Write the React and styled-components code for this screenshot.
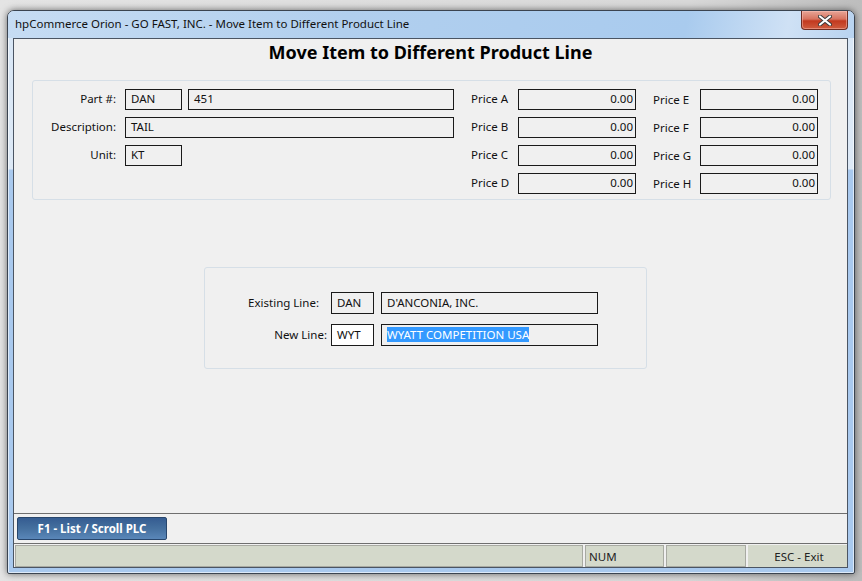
import styled, { createGlobalStyle } from 'styled-components';

const GlobalStyle = createGlobalStyle`
  html, body {
    margin: 0;
    padding: 0;
    background: #d9d9d9;
  }
  body {
    font-family: "Noto Sans", "Open Sans", "DejaVu Sans", sans-serif;
    font-size: 11.5px;
    color: #000;
  }
`;

const Desktop = styled.div`
  width: 862px;
  height: 581px;
  padding: 10px 7px 7px 7px;
  box-sizing: border-box;
  background: linear-gradient(to right, #e4e4e4, #d8d8d8 80%, #bdbdbd);
`;

const Window = styled.div`
  width: 848px;
  height: 564px;
  box-sizing: border-box;
  display: flex;
  flex-direction: column;
  border: 1px solid #3b4450;
  border-radius: 7px 7px 2px 2px;
  background: linear-gradient(to bottom, #bcd5f1 0, #d9e7f6 30px, #dde9f6 158px, #a9c9ee 159px, #a9c9ee 100%);
  box-shadow: 0 0 7px rgba(0, 0, 0, 0.55), inset 0 0 0 1px rgba(255, 255, 255, 0.6);
`;

const TitleBar = styled.div`
  height: 27px;
  display: flex;
  align-items: flex-start;
  justify-content: space-between;
  padding-left: 7px;
  background: linear-gradient(100deg, #c6dcf3 0, #b1cfee 40%, #a9cbee 80%, #cfe1f5 92%, #b8d3f0 100%);
  border-radius: 6px 6px 0 0;
`;

const Title = styled.div`
  font-size: 11.5px;
  line-height: 12px;
  margin-top: 7px;
  color: #111;
`;

const CloseButton = styled.div`
  width: 45px;
  height: 18px;
  margin-right: 6px;
  border: 1px solid #6e2c22;
  border-top: none;
  border-radius: 0 0 4px 4px;
  background: linear-gradient(to bottom, #e7a597 0, #d7735f 45%, #c2391f 55%, #cf5c3f 100%);
  display: flex;
  align-items: center;
  justify-content: center;
  box-shadow: inset 0 0 0 1px rgba(255, 200, 190, 0.45);
`;

const Client = styled.div`
  flex: 1;
  margin: 0 6px 5px 5px;
  border: 1px solid #4b5563;
  background: #f0f0f0;
  display: flex;
  flex-direction: column;
`;

const Content = styled.div`
  flex: 1;
  display: flex;
  flex-direction: column;
`;

const Heading = styled.h1`
  margin: 0;
  height: 27px;
  font-size: 18px;
  font-weight: 700;
  text-align: center;
  line-height: 27px;
`;

const Group = styled.div`
  box-sizing: border-box;
  width: ${({ $w }) => $w}px;
  height: ${({ $h }) => $h}px;
  margin-left: ${({ $left }) => $left}px;
  margin-top: ${({ $top }) => $top}px;
  border: 1px solid #d6dfe7;
  border-radius: 3px;
  padding-top: ${({ $pt }) => $pt}px;
  display: flex;
`;

const Fields = styled.div`
  display: flex;
  flex-direction: column;
  gap: ${({ $gap }) => $gap || 7}px;
`;

const Row = styled.div`
  display: flex;
  align-items: center;
  height: ${({ $h }) => $h || 21}px;
`;

const Label = styled.div`
  box-sizing: border-box;
  width: ${({ $w }) => $w}px;
  padding-right: ${({ $pr }) => $pr}px;
  padding-bottom: 2px;
  text-align: right;
  white-space: nowrap;
  color: #111;
`;

const Box = styled.div`
  box-sizing: border-box;
  width: ${({ $w }) => $w}px;
  height: ${({ $h }) => $h || 21}px;
  margin-left: ${({ $ml }) => $ml || 0}px;
  border: 1px solid #1a1a1a;
  background: ${({ $white }) => ($white ? '#fff' : 'transparent')};
  padding: 0 ${({ $num }) => ($num ? 2 : 4)}px 2px ${({ $num }) => ($num ? 2 : 5)}px;
  display: flex;
  align-items: center;
  justify-content: ${({ $num }) => ($num ? 'flex-end' : 'flex-start')};
  white-space: nowrap;
  overflow: hidden;
  color: #111;
`;

const Selected = styled.span`
  background: #3399ff;
  color: #fff;
  line-height: 15px;
`;

const Prices = styled.div`
  display: grid;
  grid-template-columns: 47px 118px 64px 118px;
  grid-auto-rows: 21px;
  row-gap: 7px;
  margin-left: 17px;
  align-items: center;
`;

const PriceLabel = styled.div`
  white-space: nowrap;
  color: #111;
  padding-left: ${({ $right }) => ($right ? 17 : 0)}px;
  margin-bottom: ${({ $right }) => ($right ? 0 : 2)}px;
`;

const ButtonBar = styled.div`
  height: 29px;
  border-top: 1px solid #6f6f6f;
  border-bottom: 1px solid #6f6f6f;
  display: flex;
  align-items: flex-start;
  padding-left: 3px;
`;

const FnButton = styled.div`
  box-sizing: border-box;
  width: 150px;
  height: 23px;
  margin-top: 3px;
  padding-bottom: 1px;
  border: 1px solid #28466c;
  border-radius: 2px;
  background: linear-gradient(to bottom, #355c91 0, #45709f 50%, #5a87b9 100%);
  color: #fff;
  font-weight: 700;
  font-size: 11.5px;
  display: flex;
  align-items: center;
  justify-content: center;
`;

const StatusBar = styled.div`
  height: 23px;
  display: flex;
  gap: 2px;
  padding: 1px 0 0 1px;
  box-sizing: border-box;
  background: #f0f0f0;
`;

const Panel = styled.div`
  box-sizing: border-box;
  width: ${({ $w }) => $w}px;
  flex: ${({ $grow }) => ($grow ? 1 : 'none')};
  height: 22px;
  background: #d4d9cb;
  border: 1px solid ${({ $flat }) => ($flat ? '#d4d9cb' : '#a8aaa2')};
  display: flex;
  align-items: center;
  justify-content: ${({ $center }) => ($center ? 'center' : 'flex-start')};
  padding-left: ${({ $center }) => ($center ? 3 : 3)}px;
  padding-top: 1px;
  color: #222;
`;

const prices = [
  ['Price A', 'Price E'],
  ['Price B', 'Price F'],
  ['Price C', 'Price G'],
  ['Price D', 'Price H'],
];

export default function App() {
  return (
    <>
      <GlobalStyle />
      <Desktop>
        <Window>
          <TitleBar>
            <Title>hpCommerce Orion - GO FAST, INC. - Move Item to Different Product Line</Title>
            <CloseButton>
              <svg width="14" height="11" viewBox="0 0 14 11">
                <path
                  d="M2 1.5 L12 9.5 M12 1.5 L2 9.5"
                  stroke="#3b3b3b"
                  strokeWidth="4"
                  strokeLinecap="round"
                />
                <path
                  d="M2 1.5 L12 9.5 M12 1.5 L2 9.5"
                  stroke="#fff"
                  strokeWidth="2.2"
                  strokeLinecap="round"
                />
              </svg>
            </CloseButton>
          </TitleBar>
          <Client>
            <Content>
              <Heading>Move Item to Different Product Line</Heading>
              <Group $w={799} $h={120} $left={18} $top={14} $pt={8}>
                <Fields>
                  <Row>
                    <Label $w={92} $pr={9}>Part #:</Label>
                    <Box $w={57}>DAN</Box>
                    <Box $w={266} $ml={6}>451</Box>
                  </Row>
                  <Row>
                    <Label $w={92} $pr={9}>Description:</Label>
                    <Box $w={329}>TAIL</Box>
                  </Row>
                  <Row>
                    <Label $w={92} $pr={9}>Unit:</Label>
                    <Box $w={57}>KT</Box>
                  </Row>
                </Fields>
                <Prices>
                  {prices.map(([a, b]) => [
                    <PriceLabel key={a}>{a}</PriceLabel>,
                    <Box key={a + 'v'} $w={118} $num>0.00</Box>,
                    <PriceLabel key={b} $right>{b}</PriceLabel>,
                    <Box key={b + 'v'} $w={118} $num>0.00</Box>,
                  ])}
                </Prices>
              </Group>
              <Group $w={443} $h={102} $left={190} $top={67} $pt={24}>
                <Fields $gap={10}>
                  <Row $h={22}>
                    <Label $w={126} $pr={12}>Existing Line:</Label>
                    <Box $w={43} $h={22}>DAN</Box>
                    <Box $w={217} $h={22} $ml={7}>D'ANCONIA, INC.</Box>
                  </Row>
                  <Row $h={22}>
                    <Label $w={126} $pr={4}>New Line:</Label>
                    <Box $w={43} $h={22} $white>WYT</Box>
                    <Box $w={217} $h={22} $ml={7}>
                      <Selected>WYATT COMPETITION USA</Selected>
                    </Box>
                  </Row>
                </Fields>
              </Group>
            </Content>
            <ButtonBar>
              <FnButton>F1 - List / Scroll PLC</FnButton>
            </ButtonBar>
            <StatusBar>
              <Panel $grow />
              <Panel $w={79}>NUM</Panel>
              <Panel $w={80} />
              <Panel $w={99} $flat $center>ESC - Exit</Panel>
            </StatusBar>
          </Client>
        </Window>
      </Desktop>
    </>
  );
}
